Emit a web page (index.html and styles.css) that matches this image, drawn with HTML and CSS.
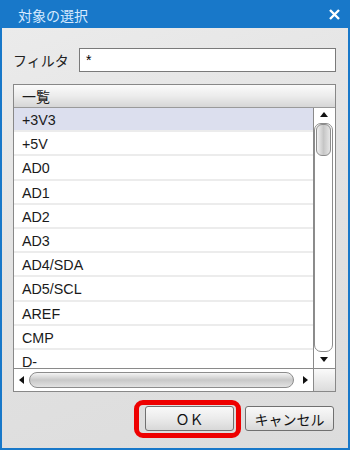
FILE: index.html
```html
<!DOCTYPE html>
<html lang="ja">
<head>
    <meta charset="UTF-8">
    <meta name="viewport" content="width=device-width, initial-scale=1.0">
    <title>対象の選択</title>
    <link rel="stylesheet" href="styles.css">
</head>
<body>
    <div class="window">
        <div class="title-bar">
            <span class="title">対象の選択</span>
            <span class="close">
                <svg width="11" height="11" viewBox="0 0 11 11">
                    <path d="M1 1 L10 10 M10 1 L1 10" stroke="#fff" stroke-width="2.4" fill="none"/>
                </svg>
            </span>
        </div>

        <div class="content">
            <div class="filter-row">
                <label for="filter">フィルタ</label>
                <input type="text" id="filter" value="*">
            </div>

            <div class="list-box">
                <div class="list-header">一覧</div>
                <div class="list-main">
                    <ul class="list-rows">
                        <li class="selected">+3V3</li>
                        <li>+5V</li>
                        <li>AD0</li>
                        <li>AD1</li>
                        <li>AD2</li>
                        <li>AD3</li>
                        <li>AD4/SDA</li>
                        <li>AD5/SCL</li>
                        <li>AREF</li>
                        <li>CMP</li>
                        <li>D-</li>
                    </ul>
                    <div class="vscroll">
                        <div class="arrow arrow-up"></div>
                        <div class="groove">
                            <div class="thumb"></div>
                        </div>
                        <div class="arrow arrow-down"></div>
                    </div>
                </div>
                <div class="hscroll">
                    <div class="arrow arrow-left"></div>
                    <div class="hgroove"></div>
                    <div class="arrow arrow-right"></div>
                    <div class="corner"></div>
                </div>
            </div>

            <div class="buttons">
                <div class="highlight">
                    <button class="btn">ＯＫ</button>
                </div>
                <button class="btn">キャンセル</button>
            </div>
        </div>
    </div>
</body>
</html>
```

FILE: styles.css
```css
* {
    margin: 0;
    padding: 0;
    box-sizing: border-box;
}

body {
    width: 350px;
    height: 450px;
    overflow: hidden;
    font-family: "Liberation Sans", "Noto Sans CJK JP", sans-serif;
    font-size: 14px;
    color: #1a1a1a;
}

.window {
    width: 350px;
    height: 450px;
    border: 2px solid #1878c9;
    border-top: none;
    background: linear-gradient(160deg, #ececec 0%, #e2e2e2 50%, #dcdcdc 100%);
    display: flex;
    flex-direction: column;
}

.title-bar {
    height: 28px;
    margin: 0 -2px;
    background: #1878c9;
    display: flex;
    align-items: center;
    justify-content: space-between;
    padding: 0 10px 0 18px;
}

.title {
    color: #d6eaff;
    font-family: "Noto Sans CJK JP", sans-serif;
    font-size: 14px;
    padding-top: 1px;
}

.close {
    display: flex;
    width: 11px;
    height: 11px;
}

.content {
    flex: 1;
    padding: 20px 12px 0 11px;
    display: flex;
    flex-direction: column;
}

.filter-row {
    display: flex;
    align-items: center;
    height: 24px;
}

.filter-row label {
    width: 66px;
    font-family: "Noto Sans CJK JP", sans-serif;
    font-size: 14px;
    color: #222;
}

.filter-row input {
    flex: 1;
    height: 24px;
    border: 1px solid #7a7a7a;
    background: #fff;
    padding: 0 6px;
    font-family: "Liberation Sans", sans-serif;
    font-size: 14px;
    outline: none;
}

.list-box {
    margin-top: 12px;
    height: 308px;
    border: 1px solid #888;
    display: flex;
    flex-direction: column;
    background: #fff;
}

.list-header {
    height: 23px;
    flex-shrink: 0;
    border-bottom: 1px solid #9a9a9a;
    background: linear-gradient(#fbfbfb, #ececec 50%, #d6d6d6);
    padding-left: 8px;
    line-height: 22px;
    font-family: "Noto Sans CJK JP", sans-serif;
}

.list-main {
    flex: 1;
    display: flex;
    overflow: hidden;
}

.list-rows {
    flex: 1;
    list-style: none;
    overflow: hidden;
}

.list-rows li {
    height: 24.2px;
    line-height: 22px;
    padding: 1px 0 0 8px;
    border-bottom: 2px solid #ececec;
    font-size: 14.3px;
}

.list-rows li.selected {
    background: #dcdfee;
}

.vscroll {
    width: 22px;
    border-left: 1px solid #8a8a8a;
    display: flex;
    flex-direction: column;
    background: #fff;
}

.groove {
    flex: 1;
    margin: 0 2px 0 0;
    border: 1px solid #8c8c8c;
    border-radius: 7px;
}

.thumb {
    height: 32px;
    margin: 0 1px;
    border: 1px solid #8c8c8c;
    border-radius: 6px;
    background: linear-gradient(90deg, #f2f2f2, #c6c6c6 50%, #e6e6e6);
}

.arrow {
    position: relative;
    flex-shrink: 0;
}

.arrow::after {
    content: '';
    position: absolute;
    width: 0;
    height: 0;
}

.arrow-up {
    height: 15px;
}

.arrow-up::after {
    left: 6px;
    top: 4px;
    border-left: 4px solid transparent;
    border-right: 4px solid transparent;
    border-bottom: 5px solid #111;
}

.arrow-down {
    height: 16px;
}

.arrow-down::after {
    left: 6px;
    top: 5px;
    border-left: 4px solid transparent;
    border-right: 4px solid transparent;
    border-top: 5px solid #111;
}

.hscroll {
    height: 23px;
    flex-shrink: 0;
    border-top: 1px solid #8a8a8a;
    display: flex;
    align-items: center;
    background: #fff;
}

.arrow-left {
    width: 15px;
    height: 100%;
}

.arrow-left::after {
    left: 5px;
    top: 7px;
    border-top: 4px solid transparent;
    border-bottom: 4px solid transparent;
    border-right: 5px solid #111;
}

.hgroove {
    flex: 1;
    height: 16px;
    border: 1px solid #8c8c8c;
    border-radius: 8px;
    background: linear-gradient(#f4f4f4, #c8c8c8 50%, #e2e2e2);
}

.arrow-right {
    width: 19px;
    height: 100%;
}

.arrow-right::after {
    left: 9px;
    top: 7px;
    border-top: 4px solid transparent;
    border-bottom: 4px solid transparent;
    border-left: 5px solid #111;
}

.corner {
    width: 22px;
    height: 100%;
    border-left: 1px solid #8a8a8a;
    background: linear-gradient(#fafafa, #dcdcdc);
}

.buttons {
    margin-top: 14px;
    display: flex;
    justify-content: flex-end;
    gap: 11px;
    padding-right: 2px;
}

.highlight {
    position: relative;
    display: flex;
}

.highlight::after {
    content: '';
    position: absolute;
    left: -11px;
    top: -6px;
    right: -7px;
    bottom: -7px;
    border: 5px solid #ee0000;
    border-radius: 9px;
}

.btn {
    width: 89px;
    height: 25px;
    border: 1px solid #707070;
    border-radius: 3px;
    background: linear-gradient(#f9f9f9, #ebebeb 50%, #d8d8d8);
    font-family: "Noto Sans CJK JP", sans-serif;
    font-size: 14px;
    color: #111;
}
```
